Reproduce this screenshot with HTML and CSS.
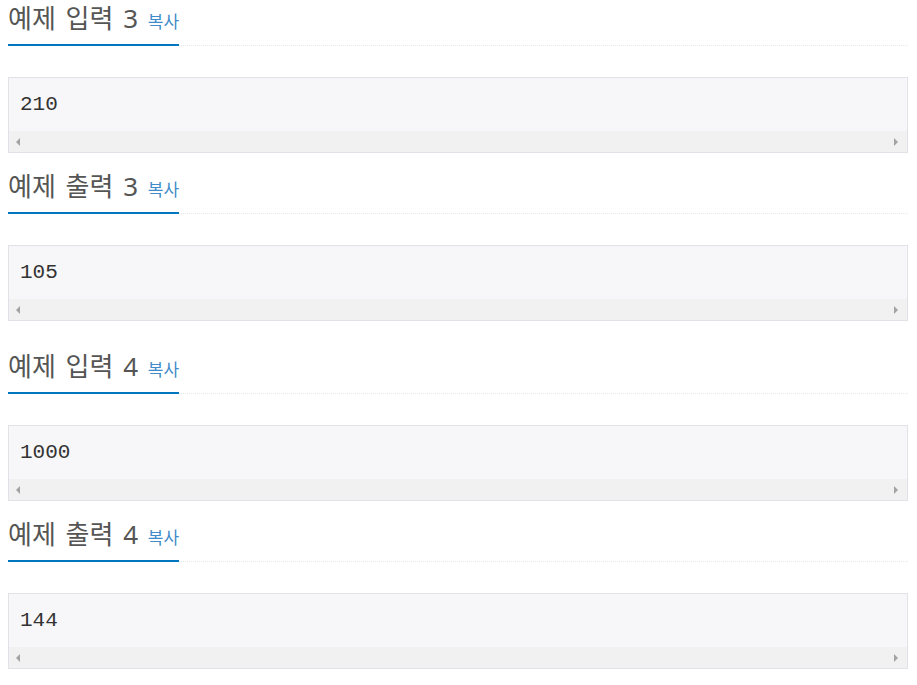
FILE: index.html
```html
<!DOCTYPE html>
<html lang="ko">
<head>
<meta charset="utf-8">
<title>예제</title>
<link rel="stylesheet" href="styles.css">
</head>
<body>
<div class="page">
  <section class="sample sample-in first">
    <div class="headline"><h2>예제 입력 3 <span class="copy">복사</span></h2></div>
    <div class="sampledata">
      <pre class="code">210</pre>
      <div class="scrollbar"><span class="arrow left"></span><span class="arrow right"></span></div>
    </div>
  </section>
  <section class="sample sample-out">
    <div class="headline"><h2>예제 출력 3 <span class="copy">복사</span></h2></div>
    <div class="sampledata">
      <pre class="code">105</pre>
      <div class="scrollbar"><span class="arrow left"></span><span class="arrow right"></span></div>
    </div>
  </section>
  <section class="sample sample-in">
    <div class="headline"><h2>예제 입력 4 <span class="copy">복사</span></h2></div>
    <div class="sampledata">
      <pre class="code">1000</pre>
      <div class="scrollbar"><span class="arrow left"></span><span class="arrow right"></span></div>
    </div>
  </section>
  <section class="sample sample-out">
    <div class="headline"><h2>예제 출력 4 <span class="copy">복사</span></h2></div>
    <div class="sampledata">
      <pre class="code">144</pre>
      <div class="scrollbar"><span class="arrow left"></span><span class="arrow right"></span></div>
    </div>
  </section>
</div>
</body>
</html>
```
FILE: styles.css
```css
html, body {
  margin: 0;
  padding: 0;
  background: #fff;
}
.page {
  width: 900px;
  padding-left: 8px;
  font-family: "Noto Sans", "Noto Sans CJK KR", sans-serif;
}
.sample-in {
  margin-top: 27px;
}
.sample-out {
  margin-top: 15px;
}
.sample.first {
  margin-top: 0;
}
.headline {
  border-bottom: 1px dotted #e4e9f0;
}
.headline h2 {
  display: inline-block;
  margin: 0 0 -1px 0;
  padding: 0 0 8px 0;
  height: 36px;
  line-height: 36px;
  font-size: 26px;
  font-weight: normal;
  word-spacing: 3px;
  color: #555;
  border-bottom: 2px solid #0076c0;
}
.copy {
  font-size: 17px;
  line-height: 20px;
  color: #428bca;
  word-spacing: 0;
}
.sampledata {
  margin-top: 31px;
  border: 1px solid #e1e1e8;
  background: #f7f7f9;
}
.code {
  margin: 0;
  height: 53px;
  padding: 0 11px;
  box-sizing: border-box;
  font-family: "Liberation Mono", monospace;
  font-size: 21px;
  line-height: 53px;
  color: #333;
}
.scrollbar {
  height: 21px;
  background: #f1f1f1;
  display: flex;
  align-items: center;
  justify-content: space-between;
  padding: 0 9px 0 7px;
}
.arrow {
  width: 0;
  height: 0;
  border-top: 4px solid transparent;
  border-bottom: 4px solid transparent;
}
.arrow.left {
  border-right: 4px solid #a3a3a3;
}
.arrow.right {
  border-left: 4px solid #a3a3a3;
}
```
